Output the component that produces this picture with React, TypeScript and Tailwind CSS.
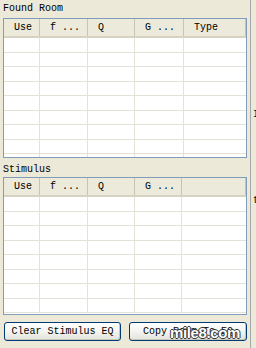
const roomCols = [
  { label: 'Use', w: 'w-[36px]' },
  { label: 'f ...', w: 'w-[48px]' },
  { label: 'Q', w: 'w-[47px]' },
  { label: 'G ...', w: 'w-[49px]' },
  { label: 'Type', w: 'flex-1' },
];

const stimCols = [
  { label: 'Use', w: 'w-[36px]' },
  { label: 'f ...', w: 'w-[48px]' },
  { label: 'Q', w: 'w-[47px]' },
  { label: 'G ...', w: 'w-[47px]' },
  { label: '', w: 'flex-1' },
];

function Grid({ cols, rows, bodyH }: { cols: { label: string; w: string }[]; rows: number; bodyH: string }) {
  return (
    <div className="mx-[3px] border border-[#7f9db9] bg-white">
      {/* header */}
      <div className="flex h-[19px] border-b-2 border-[#d6d2c2] bg-[#ebeadb]">
        {cols.map((c, i) => (
          <div key={i} className={`${c.w} flex items-center border-r border-[#c7c5b2] pl-[10px]`}>
            <span className="whitespace-pre">{c.label}</span>
          </div>
        ))}
      </div>
      {/* body */}
      <div className={`${bodyH} overflow-hidden`}>
        {Array.from({ length: rows }).map((_, r) => (
          <div key={r} className="flex h-[14.5px] border-b border-[#e3e2d9]">
            {cols.map((c, i) => (
              <div key={i} className={`${c.w} ${i < cols.length - 1 ? 'border-r border-[#e3e2d9]' : ''}`} />
            ))}
          </div>
        ))}
      </div>
    </div>
  );
}

function XpButton({ label }: { label: string }) {
  return (
    <button className="h-[19px] whitespace-pre rounded-[3px] border border-[#003c74] bg-gradient-to-b from-white via-[#f4f4f0] to-[#e3e2da] text-black shadow-[inset_-1px_-1px_0_#c9c7ba]">
      {label}
    </button>
  );
}

export default function App() {
  return (
    <div
      className="relative flex h-[348px] w-[256px] overflow-hidden bg-[#ece9d8] text-[10px] leading-none text-black"
      style={{ fontFamily: '"Liberation Mono", "DejaVu Sans Mono", monospace' }}
    >
      {/* main panel */}
      <div className="flex w-[250px] flex-col">
        <div className="h-[18px] pl-[3px] pt-[4px]">Found Room</div>
        <Grid cols={roomCols} rows={9} bodyH="h-[119px]" />

        <div className="h-[19px] pl-[3px] pt-[7px]">Stimulus</div>
        <Grid cols={stimCols} rows={8} bodyH="h-[117px]" />

        <div className="mt-[7px] grid grid-cols-[117px_118px] gap-[8px] pl-[4px]">
          <XpButton label="Clear Stimulus EQ" />
          <XpButton label="Copy Room To EQ" />
        </div>
      </div>

      {/* clipped edge of neighbouring panel */}
      <div className="flex w-[6px] flex-col border-l border-[#a7a6aa]">
        <div className="h-[110px]" />
        <div className="pl-[2px] text-[10px]">I</div>
        <div className="h-[76px]" />
        <div className="pl-[2px] text-[10px]">t</div>
      </div>

      {/* site watermark */}
      <div
        className="absolute left-[170px] top-[325px] text-[15px] font-bold tracking-tight text-white"
        style={{
          fontFamily: '"Liberation Sans", Arial, sans-serif',
          textShadow: '1px 0 0 #333, -1px 0 0 #333, 0 1px 0 #333, 0 -1px 0 #333',
        }}
      >
        mile8.com
      </div>
    </div>
  );
}
